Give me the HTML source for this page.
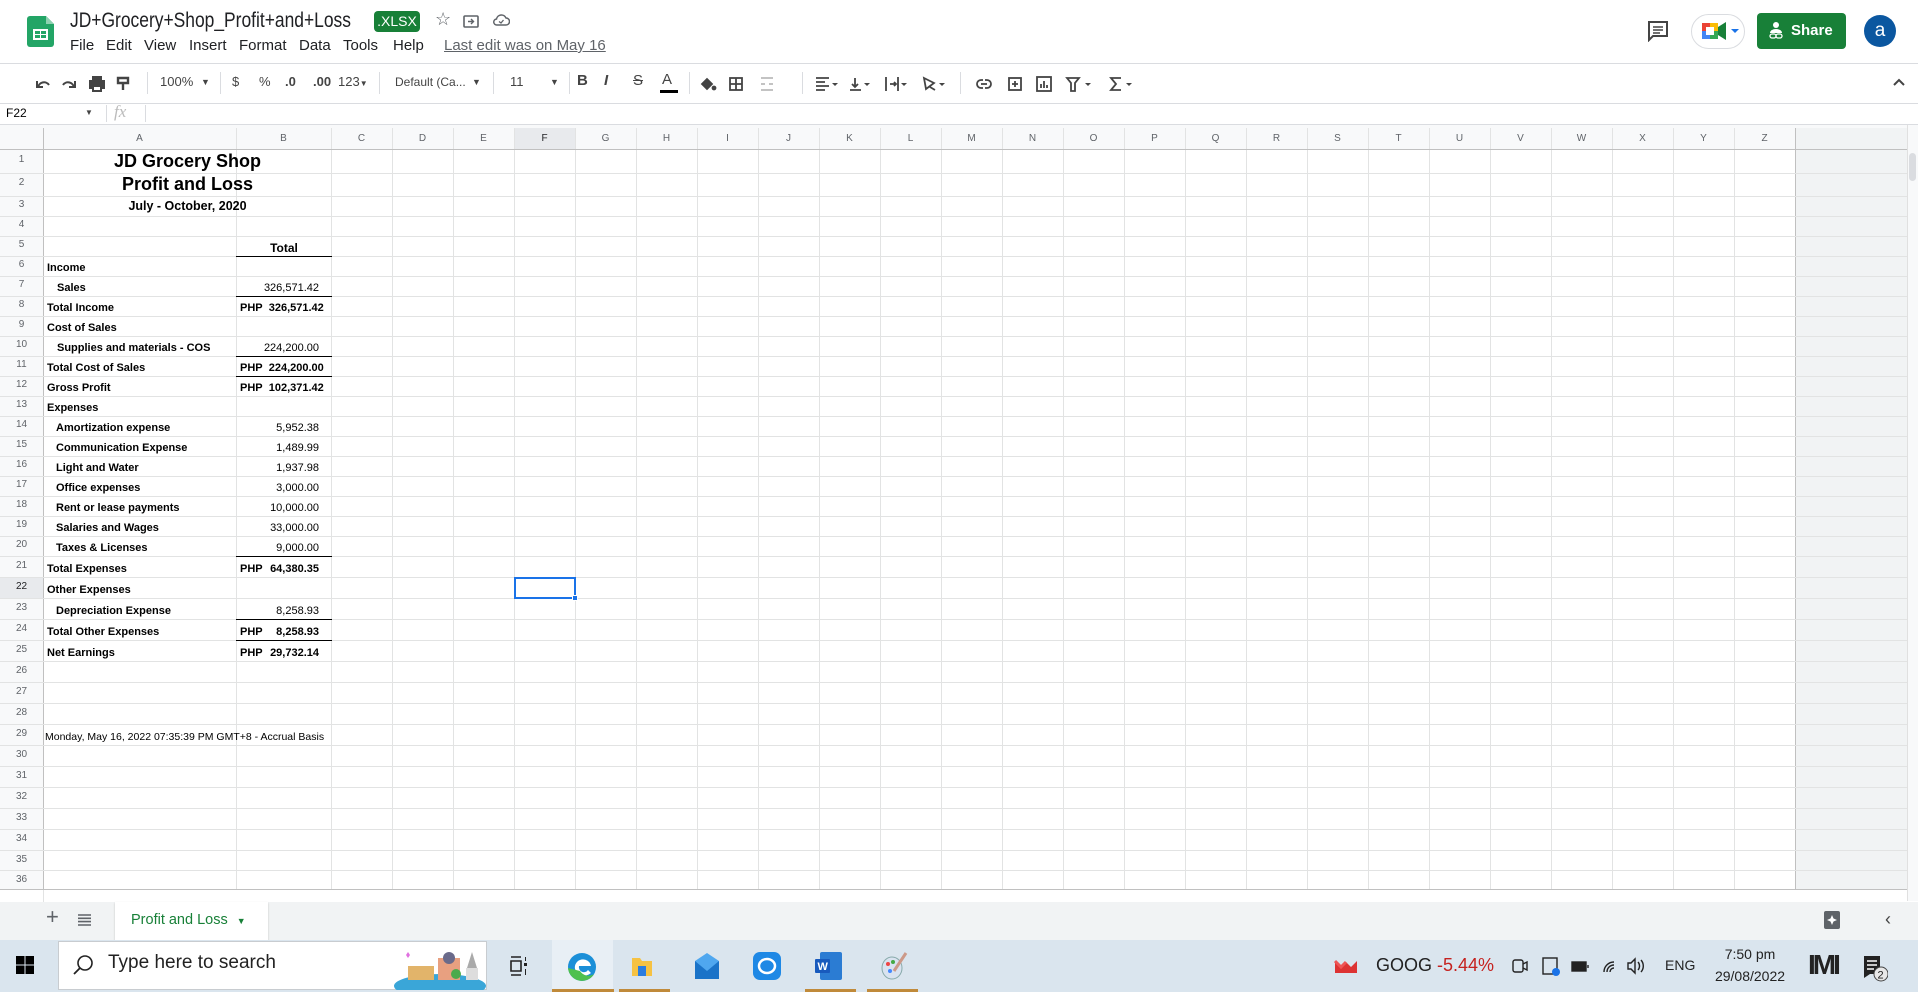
<!DOCTYPE html>
<html><head><meta charset="utf-8">
<style>
*{box-sizing:border-box;margin:0;padding:0}
body{width:1918px;height:992px;position:relative;overflow:hidden;background:#fff;font-family:"Liberation Sans",Arial,sans-serif;color:#000}
.a{position:absolute;white-space:nowrap}
.hl{position:absolute;left:0;width:1907px;height:1px;background:#e2e3e3}
.vl{position:absolute;top:128px;height:762px;width:1px;background:#e2e3e3}
.ch{position:absolute;top:128px;height:22px;line-height:22px;font-size:10px;color:#5f6368;text-align:center}
.rh{position:absolute;left:0;width:43px;text-align:center;font-size:10px;color:#5f6368}
.t{position:absolute;font-size:11px;font-weight:bold;white-space:nowrap}
.n{position:absolute;font-size:11px;white-space:nowrap;right:1599px;text-align:right}
.bl{position:absolute;left:236px;width:96px;height:1px;background:#000}
.tb{position:absolute;top:74px;color:#444;font-size:13px}
.sep{position:absolute;top:72px;width:1px;height:22px;background:#dadce0}
.m{position:absolute;top:37px;font-size:15px;color:#202124}
</style></head><body>

<!-- title bar -->
<svg class="a" style="left:27px;top:16px" width="27" height="31" viewBox="0 0 27 31"><path d="M0 3a3 3 0 0 1 3-3h16l8 8v20a3 3 0 0 1-3 3H3a3 3 0 0 1-3-3z" fill="#23a566"/><path d="M19 0v8h8z" fill="#8ed1b1"/><rect x="6" y="13" width="15" height="11" fill="#fff"/><rect x="8" y="15" width="5" height="3" fill="#23a566"/><rect x="14" y="15" width="5" height="3" fill="#23a566"/><rect x="8" y="19" width="5" height="3" fill="#23a566"/><rect x="14" y="19" width="5" height="3" fill="#23a566"/></svg>
<div class="a" style="left:70px;top:9px;font-size:21px;color:#202124;transform:scaleX(0.83);transform-origin:left top">JD+Grocery+Shop_Profit+and+Loss</div>
<div class="a" style="left:374px;top:11px;width:46px;height:21px;background:#188038;border-radius:4px;color:#fff;font-size:14px;line-height:21px;text-align:center">.XLSX</div>
<div class="a" style="left:435px;top:9px;font-size:18px;color:#5f6368">☆</div>
<svg class="a" style="left:463px;top:14px" width="16" height="14"><rect x="1" y="2" width="14" height="11" rx="1" fill="none" stroke="#5f6368" stroke-width="1.6"/><path d="M5 7.5h5M8 5l2.5 2.5L8 10" stroke="#5f6368" stroke-width="1.4" fill="none"/></svg>
<svg class="a" style="left:492px;top:13px" width="18" height="14"><path d="M5 12h9a3.5 3.5 0 0 0 0-7 5 5 0 0 0-9.5 1A3 3 0 0 0 5 12z" fill="none" stroke="#5f6368" stroke-width="1.5"/><path d="M7 8.5l2 1.5 2.5-3" stroke="#5f6368" stroke-width="1.3" fill="none"/></svg>
<div class="m" style="left:70px">File</div>
<div class="m" style="left:106px">Edit</div>
<div class="m" style="left:144px">View</div>
<div class="m" style="left:189px">Insert</div>
<div class="m" style="left:239px">Format</div>
<div class="m" style="left:299px">Data</div>
<div class="m" style="left:343px">Tools</div>
<div class="m" style="left:393px">Help</div>
<div class="m" style="left:444px;color:#5f6368;text-decoration:underline">Last edit was on May 16</div>

<svg class="a" style="left:1647px;top:20px" width="22" height="22"><path d="M2 2h18v14H6l-4 4z" fill="none" stroke="#444" stroke-width="2"/><path d="M6 7h10M6 10h10M6 13h7" stroke="#444" stroke-width="1.6"/></svg>
<div class="a" style="left:1691px;top:14px;width:54px;height:35px;border:1px solid #dadce0;border-radius:18px"></div>
<svg class="a" style="left:1702px;top:21px" width="40" height="20"><rect x="0" y="2" width="8" height="8" fill="#ea4335"/><rect x="8" y="2" width="8" height="8" fill="#fbbc04"/><rect x="0" y="10" width="8" height="8" fill="#4285f4"/><rect x="8" y="10" width="8" height="8" fill="#34a853"/><rect x="4" y="6" width="8" height="8" fill="#fff"/><path d="M16 6l8-5v18l-8-5z" fill="#188038"/><path d="M29 8l4 4 4-4z" fill="#1a73e8"/></svg>
<div class="a" style="left:1757px;top:13px;width:89px;height:36px;background:#188038;border-radius:4px;color:#fff;font-size:15px;font-weight:bold;line-height:36px;padding-left:34px">Share</div>
<svg class="a" style="left:1768px;top:21px" width="16" height="20"><circle cx="8" cy="4" r="3" fill="#fff"/><path d="M2 12a6 4 0 0 1 12 0z" fill="#fff"/><rect x="2" y="13" width="6" height="4" rx="2" fill="none" stroke="#fff" stroke-width="1.3"/><rect x="8" y="13" width="6" height="4" rx="2" fill="none" stroke="#fff" stroke-width="1.3"/></svg>
<div class="a" style="left:1864px;top:15px;width:32px;height:32px;border-radius:50%;background:#0b57a0;color:#fff;font-size:19px;line-height:31px;text-align:center">a</div>

<div class="a" style="left:0;top:63px;width:1918px;height:1px;background:#dadce0"></div>

<!-- toolbar -->
<svg class="a" style="left:35px;top:76px" width="110" height="16" stroke="#444" stroke-width="2" fill="none"><path d="M3 12a6 6 0 0 1 11-3M2 5v6h6"/><path d="M39 12a6 6 0 0 0-11-3M40 5v6h-6"/><rect x="55" y="5" width="14" height="7" fill="#444"/><rect x="58" y="1" width="8" height="4" fill="#444"/><rect x="58" y="10" width="8" height="5" fill="#fff"/><path d="M83 2h10v5H83zM88 7v7" stroke-width="2.4"/></svg>
<div class="sep" style="left:147px"></div>
<div class="tb" style="left:160px">100%</div><div class="tb" style="left:201px;font-size:9px;top:77px">▼</div>
<div class="sep" style="left:220px"></div>
<div class="tb" style="left:232px">$</div>
<div class="tb" style="left:259px">%</div>
<div class="tb" style="left:285px;font-weight:bold">.0</div>
<div class="tb" style="left:313px;font-weight:bold">.00</div>
<div class="tb" style="left:338px">123<span style="font-size:8px">▼</span></div>
<div class="sep" style="left:379px"></div>
<div class="tb" style="left:395px;font-size:12px;top:75px">Default (Ca...</div><div class="tb" style="left:472px;font-size:9px;top:77px">▼</div>
<div class="sep" style="left:493px"></div>
<div class="tb" style="left:510px">11</div><div class="tb" style="left:550px;font-size:9px;top:77px">▼</div>
<div class="sep" style="left:569px"></div>
<div class="tb" style="left:577px;font-weight:bold;font-size:15px;top:72px">B</div>
<div class="tb" style="left:604px;font-style:italic;font-weight:bold;font-size:15px;top:72px">I</div>
<div class="tb" style="left:633px;text-decoration:line-through;font-size:15px;top:72px">S</div>
<div class="tb" style="left:662px;font-size:15px;top:71px">A</div><div class="a" style="left:660px;top:90px;width:18px;height:3px;background:#000"></div>
<div class="sep" style="left:689px"></div>
<svg class="a" style="left:698px;top:75px" width="440" height="18" stroke="#444" stroke-width="1.8" fill="none">
<path d="M4 9l5-5 5 5-5 5z" fill="#444"/><circle cx="16" cy="13" r="1.5" fill="#444"/>
<rect x="32" y="3" width="12" height="12"/><path d="M38 3v12M32 9h12"/>
<path d="M63 3h12M63 15h12M63 9h4M71 9h4" stroke="#bbb"/>
<path d="M118 3h13M118 7h9M118 11h13M118 15h9"/><path d="M134 8l3 3 3-3z" fill="#444" stroke="none"/>
<path d="M152 15h11M157 3v9M154 9l3 3 3-3"/><path d="M166 8l3 3 3-3z" fill="#444" stroke="none"/>
<path d="M188 2v14M200 2v14M192 9h6M196 7l2 2-2 2"/><path d="M203 8l3 3 3-3z" fill="#444" stroke="none"/>
<path d="M226 3l10 5-8 6zM232 12l5 3"/><path d="M241 8l3 3 3-3z" fill="#444" stroke="none"/>
<path d="M283 9h6M285 5h-2a4 4 0 0 0 0 8h2M287 5h2a4 4 0 0 1 0 8h-2"/>
<rect x="311" y="3" width="12" height="12"/><path d="M317 6v6M314 9h6"/>
<rect x="339" y="2" width="14" height="14"/><path d="M343 13v-4M346 13V6M349 13v-3"/>
<path d="M369 3h12l-4 5v8h-4V8z"/><path d="M387 8l3 3 3-3z" fill="#444" stroke="none"/>
<path d="M423 3h-10l5 6-5 6h10"/><path d="M428 8l3 3 3-3z" fill="#444" stroke="none"/>
</svg>
<div class="sep" style="left:802px"></div><div class="sep" style="left:960px"></div>
<svg class="a" style="left:1892px;top:77px" width="14" height="10"><path d="M2 8l5-5 5 5" stroke="#444" stroke-width="2" fill="none"/></svg>

<div class="a" style="left:0;top:103px;width:1918px;height:1px;background:#dadce0"></div>
<div class="a" style="left:6px;top:106px;font-size:12px;color:#000">F22</div>
<div class="a" style="left:85px;top:108px;font-size:8px;color:#444">▼</div>
<div class="a" style="left:106px;top:105px;width:1px;height:17px;background:#dadce0"></div>
<div class="a" style="left:114px;top:102px;font-size:17px;color:#bbb;font-style:italic;font-family:'Liberation Serif',serif">fx</div>
<div class="a" style="left:145px;top:105px;width:1px;height:17px;background:#dadce0"></div>
<div class="a" style="left:0;top:124px;width:1918px;height:1px;background:#dadce0"></div>

<!-- grid background -->
<div class="a" style="left:0;top:125px;width:1918px;height:3px;background:#f8f9fa"></div>
<div class="a" style="left:0;top:128px;width:1907px;height:22px;background:#f8f9fa"></div>
<div class="a" style="left:0;top:128px;width:43px;height:762px;background:#f8f9fa"></div>
<div class="a" style="left:514px;top:128px;width:61px;height:22px;background:#e8eaed"></div>
<div class="a" style="left:0;top:578px;width:43px;height:21px;background:#e8eaed"></div>
<div class="a" style="left:1796px;top:128px;width:111px;height:762px;background:#f1f3f4"></div>
<div class="a" style="left:1907px;top:125px;width:11px;height:776px;background:#f8f9fa;border-left:1px solid #e0e0e0"></div>
<div class="a" style="left:1909px;top:153px;width:7px;height:28px;background:#dadce0;border-radius:4px"></div>

<!-- vertical lines -->
<div class="vl" style="left:43px;background:#c0c0c0"></div>
<div class="vl" style="left:236px"></div><div class="vl" style="left:331px"></div>
<div class="vl" style="left:392px"></div><div class="vl" style="left:453px"></div><div class="vl" style="left:514px"></div><div class="vl" style="left:575px"></div><div class="vl" style="left:636px"></div><div class="vl" style="left:697px"></div><div class="vl" style="left:758px"></div><div class="vl" style="left:819px"></div><div class="vl" style="left:880px"></div><div class="vl" style="left:941px"></div><div class="vl" style="left:1002px"></div><div class="vl" style="left:1063px"></div><div class="vl" style="left:1124px"></div><div class="vl" style="left:1185px"></div><div class="vl" style="left:1246px"></div><div class="vl" style="left:1307px"></div><div class="vl" style="left:1368px"></div><div class="vl" style="left:1429px"></div><div class="vl" style="left:1490px"></div><div class="vl" style="left:1551px"></div><div class="vl" style="left:1612px"></div><div class="vl" style="left:1673px"></div><div class="vl" style="left:1734px"></div><div class="vl" style="left:1795px;background:#c0c0c0"></div>

<!-- horizontal lines -->
<div class="hl" style="top:149px;background:#c0c0c0"></div>
<div class="hl" style="top:173px"></div><div class="hl" style="top:196px"></div><div class="hl" style="top:216px"></div><div class="hl" style="top:236px"></div><div class="hl" style="top:256px"></div><div class="hl" style="top:276px"></div><div class="hl" style="top:296px"></div><div class="hl" style="top:316px"></div><div class="hl" style="top:336px"></div><div class="hl" style="top:356px"></div><div class="hl" style="top:376px"></div><div class="hl" style="top:396px"></div><div class="hl" style="top:416px"></div><div class="hl" style="top:436px"></div><div class="hl" style="top:456px"></div><div class="hl" style="top:476px"></div><div class="hl" style="top:496px"></div><div class="hl" style="top:516px"></div><div class="hl" style="top:536px"></div><div class="hl" style="top:556px"></div><div class="hl" style="top:577px"></div><div class="hl" style="top:598px"></div><div class="hl" style="top:619px"></div><div class="hl" style="top:640px"></div><div class="hl" style="top:661px"></div><div class="hl" style="top:682px"></div><div class="hl" style="top:703px"></div><div class="hl" style="top:724px"></div><div class="hl" style="top:745px"></div><div class="hl" style="top:766px"></div><div class="hl" style="top:787px"></div><div class="hl" style="top:808px"></div><div class="hl" style="top:829px"></div><div class="hl" style="top:850px"></div><div class="hl" style="top:870px"></div><div class="hl" style="top:889px;background:#c0c0c0"></div>

<!-- column headers -->
<div class="ch" style="left:43px;width:193px">A</div><div class="ch" style="left:236px;width:95px">B</div>
<div class="ch" style="left:331px;width:61px">C</div><div class="ch" style="left:392px;width:61px">D</div><div class="ch" style="left:453px;width:61px">E</div><div class="ch" style="left:514px;width:61px;color:#202124">F</div><div class="ch" style="left:575px;width:61px">G</div><div class="ch" style="left:636px;width:61px">H</div><div class="ch" style="left:697px;width:61px">I</div><div class="ch" style="left:758px;width:61px">J</div><div class="ch" style="left:819px;width:61px">K</div><div class="ch" style="left:880px;width:61px">L</div><div class="ch" style="left:941px;width:61px">M</div><div class="ch" style="left:1002px;width:61px">N</div><div class="ch" style="left:1063px;width:61px">O</div><div class="ch" style="left:1124px;width:61px">P</div><div class="ch" style="left:1185px;width:61px">Q</div><div class="ch" style="left:1246px;width:61px">R</div><div class="ch" style="left:1307px;width:61px">S</div><div class="ch" style="left:1368px;width:61px">T</div><div class="ch" style="left:1429px;width:61px">U</div><div class="ch" style="left:1490px;width:61px">V</div><div class="ch" style="left:1551px;width:61px">W</div><div class="ch" style="left:1612px;width:61px">X</div><div class="ch" style="left:1673px;width:61px">Y</div><div class="ch" style="left:1734px;width:61px">Z</div>

<!-- row headers -->
<div class="rh" style="top:154px">1</div><div class="rh" style="top:177px">2</div><div class="rh" style="top:199px">3</div><div class="rh" style="top:219px">4</div><div class="rh" style="top:239px">5</div><div class="rh" style="top:259px">6</div><div class="rh" style="top:279px">7</div><div class="rh" style="top:299px">8</div><div class="rh" style="top:319px">9</div><div class="rh" style="top:339px">10</div><div class="rh" style="top:359px">11</div><div class="rh" style="top:379px">12</div><div class="rh" style="top:399px">13</div><div class="rh" style="top:419px">14</div><div class="rh" style="top:439px">15</div><div class="rh" style="top:459px">16</div><div class="rh" style="top:479px">17</div><div class="rh" style="top:499px">18</div><div class="rh" style="top:519px">19</div><div class="rh" style="top:539px">20</div><div class="rh" style="top:560px">21</div><div class="rh" style="top:581px;color:#202124">22</div><div class="rh" style="top:602px">23</div><div class="rh" style="top:623px">24</div><div class="rh" style="top:644px">25</div><div class="rh" style="top:665px">26</div><div class="rh" style="top:686px">27</div><div class="rh" style="top:707px">28</div><div class="rh" style="top:728px">29</div><div class="rh" style="top:749px">30</div><div class="rh" style="top:770px">31</div><div class="rh" style="top:791px">32</div><div class="rh" style="top:812px">33</div><div class="rh" style="top:833px">34</div><div class="rh" style="top:854px">35</div><div class="rh" style="top:874px">36</div>

<!-- cell content -->
<div class="t" style="left:44px;width:287px;text-align:center;top:151px;font-size:18px">JD Grocery Shop</div>
<div class="t" style="left:44px;width:287px;text-align:center;top:174px;font-size:18px">Profit and Loss</div>
<div class="t" style="left:44px;width:287px;text-align:center;top:199px;font-size:12.5px">July - October, 2020</div>
<div class="t" style="left:236px;width:96px;text-align:center;top:241px;font-size:12px">Total</div>
<div class="t" style="left:47px;top:262px">Income</div>
<div class="t" style="left:57px;top:282px">Sales</div><div class="n" style="top:282px">326,571.42</div>
<div class="t" style="left:47px;top:302px">Total Income</div><div class="t" style="left:240px;top:302px">PHP&nbsp; 326,571.42</div>
<div class="t" style="left:47px;top:322px">Cost of Sales</div>
<div class="t" style="left:57px;top:342px">Supplies and materials - COS</div><div class="n" style="top:342px">224,200.00</div>
<div class="t" style="left:47px;top:362px">Total Cost of Sales</div><div class="t" style="left:240px;top:362px">PHP&nbsp; 224,200.00</div>
<div class="t" style="left:47px;top:382px">Gross Profit</div><div class="t" style="left:240px;top:382px">PHP&nbsp; 102,371.42</div>
<div class="t" style="left:47px;top:402px">Expenses</div>
<div class="t" style="left:56px;top:422px">Amortization expense</div><div class="n" style="top:422px">5,952.38</div>
<div class="t" style="left:56px;top:442px">Communication Expense</div><div class="n" style="top:442px">1,489.99</div>
<div class="t" style="left:56px;top:462px">Light and Water</div><div class="n" style="top:462px">1,937.98</div>
<div class="t" style="left:56px;top:482px">Office expenses</div><div class="n" style="top:482px">3,000.00</div>
<div class="t" style="left:56px;top:502px">Rent or lease payments</div><div class="n" style="top:502px">10,000.00</div>
<div class="t" style="left:56px;top:522px">Salaries and Wages</div><div class="n" style="top:522px">33,000.00</div>
<div class="t" style="left:56px;top:542px">Taxes &amp; Licenses</div><div class="n" style="top:542px">9,000.00</div>
<div class="t" style="left:47px;top:563px">Total Expenses</div><div class="t" style="left:240px;top:563px">PHP</div><div class="t n" style="top:563px">64,380.35</div>
<div class="t" style="left:47px;top:584px">Other Expenses</div>
<div class="t" style="left:56px;top:605px">Depreciation Expense</div><div class="n" style="top:605px">8,258.93</div>
<div class="t" style="left:47px;top:626px">Total Other Expenses</div><div class="t" style="left:240px;top:626px">PHP</div><div class="t n" style="top:626px">8,258.93</div>
<div class="t" style="left:47px;top:647px">Net Earnings</div><div class="t" style="left:240px;top:647px">PHP</div><div class="t n" style="top:647px">29,732.14</div>
<div class="a" style="left:45px;top:731px;font-size:10.5px">Monday, May 16, 2022 07:35:39 PM GMT+8 - Accrual Basis</div>

<div class="bl" style="top:256px"></div><div class="bl" style="top:296px"></div><div class="bl" style="top:356px"></div><div class="bl" style="top:376px"></div><div class="bl" style="top:556px"></div><div class="bl" style="top:619px"></div><div class="bl" style="top:640px"></div>

<!-- selection -->
<div class="a" style="left:514px;top:577px;width:62px;height:22px;border:2px solid #1a73e8"></div>
<div class="a" style="left:572px;top:595px;width:6px;height:6px;background:#1a73e8;border:1px solid #fff"></div>

<!-- scroll strip & sheet bar -->
<div class="a" style="left:0;top:890px;width:1907px;height:12px;background:#fff"></div>
<div class="a" style="left:43px;top:890px;width:1px;height:12px;background:#e2e3e3"></div>
<div class="a" style="left:0;top:902px;width:1918px;height:38px;background:#f1f3f4"></div>
<div class="a" style="left:46px;top:904px;font-size:22px;color:#5f6368">+</div>
<svg class="a" style="left:78px;top:914px" width="13" height="12"><path d="M0 1h13M0 4.3h13M0 7.6h13M0 11h13" stroke="#5f6368" stroke-width="1.6"/></svg>
<div class="a" style="left:115px;top:902px;width:153px;height:38px;background:#fff;box-shadow:0 1px 2px rgba(0,0,0,.2)"></div>
<div class="a" style="left:131px;top:912px;font-size:14.5px;color:#188038">Profit and Loss <span style="font-size:9px;margin-left:5px">▼</span></div>
<svg class="a" style="left:1824px;top:911px" width="16" height="20"><rect x="0" y="0" width="16" height="18" rx="2" fill="#5f6368"/><path d="M8 4l1.5 3.5L13 9l-3.5 1.5L8 14l-1.5-3.5L3 9l3.5-1.5z" fill="#fff"/></svg>
<div class="a" style="left:1885px;top:909px;font-size:18px;color:#444">‹</div>

<!-- taskbar -->
<div class="a" style="left:0;top:940px;width:1918px;height:52px;background:#dae5ee"></div>
<svg class="a" style="left:16px;top:956px" width="18" height="18"><rect x="0" y="0" width="8.5" height="8.5" fill="#000"/><rect x="9.5" y="0" width="8.5" height="8.5" fill="#000"/><rect x="0" y="9.5" width="8.5" height="8.5" fill="#000"/><rect x="9.5" y="9.5" width="8.5" height="8.5" fill="#000"/></svg>
<div class="a" style="left:58px;top:941px;width:429px;height:49px;background:#fff;border:1px solid #c8ccd0"></div>
<svg class="a" style="left:72px;top:954px" width="22" height="22"><circle cx="13" cy="9" r="7" fill="none" stroke="#222" stroke-width="1.6"/><path d="M8 14L2 20" stroke="#222" stroke-width="1.8"/></svg>
<div class="a" style="left:108px;top:952px;font-size:19px;color:#222">Type here to search</div>
<svg class="a" style="left:390px;top:944px" width="97" height="46"><ellipse cx="50" cy="42" rx="46" ry="12" fill="#3aa6d8"/><rect x="18" y="22" width="26" height="14" fill="#e2b46a"/><rect x="48" y="14" width="22" height="22" fill="#e8a080"/><circle cx="59" cy="14" r="6" fill="#6a6a8a"/><path d="M82 8l-5 16h10z" fill="#aaa"/><rect x="76" y="24" width="12" height="12" fill="#ddd"/><circle cx="66" cy="30" r="5" fill="#4caa4c"/><path d="M18 8l2 3-2 3-2-3z" fill="#e070e0"/></svg>
<svg class="a" style="left:508px;top:955px" width="20" height="22"><path d="M3 2h10M3 20h10M3 6h10v10H3z" stroke="#222" stroke-width="1.6" fill="none"/><rect x="16" y="8" width="3" height="3" fill="#222"/><path d="M17.5 2v4M17.5 14v6" stroke="#222"/></svg>
<div class="a" style="left:552px;top:940px;width:61px;height:52px;background:#e8eff5"></div>
<svg class="a" style="left:566px;top:951px" width="32" height="32"><circle cx="16" cy="16" r="14" fill="#1b8fd8"/><path d="M9 18a8 8 0 0 1 16-3H13a5 5 0 0 0 9 4l3 3a10 10 0 0 1-16-4z" fill="#fff"/><path d="M2 17a14 14 0 0 0 26 6 10 10 0 0 1-14-3z" fill="#4ec04e"/></svg>
<div class="a" style="left:552px;top:989px;width:62px;height:3px;background:#c08a3a"></div>
<svg class="a" style="left:630px;top:954px" width="24" height="24"><path d="M2 4h8l2 3h10v15H2z" fill="#f6c243"/><rect x="8" y="12" width="8" height="10" fill="#2b7de0"/></svg>
<div class="a" style="left:619px;top:989px;width:51px;height:3px;background:#c08a3a"></div>
<svg class="a" style="left:693px;top:953px" width="28" height="26"><path d="M2 8h24v18H2z" fill="#1a73c8"/><path d="M2 8l12 10 12-10L14 0z" fill="#4fa7ef"/></svg>
<svg class="a" style="left:752px;top:951px" width="30" height="30"><rect x="1" y="1" width="28" height="28" rx="7" fill="#1e88e5"/><ellipse cx="15" cy="15" rx="8" ry="7" fill="none" stroke="#fff" stroke-width="2.5"/></svg>
<svg class="a" style="left:814px;top:951px" width="30" height="30"><rect x="6" y="1" width="22" height="28" rx="2" fill="#2b7cd3"/><rect x="1" y="8" width="15" height="14" rx="1" fill="#185abd"/><text x="3.5" y="19" font-size="11" fill="#fff" font-family="Liberation Sans" font-weight="bold">W</text></svg>
<div class="a" style="left:805px;top:989px;width:51px;height:3px;background:#c08a3a"></div>
<svg class="a" style="left:878px;top:951px" width="30" height="30"><ellipse cx="14" cy="17" rx="10" ry="11" fill="#d9e3f0" stroke="#8aa" /><circle cx="10" cy="13" r="2" fill="#e44"/><circle cx="15" cy="11" r="2" fill="#4a4"/><circle cx="12" cy="20" r="2" fill="#48f"/><path d="M28 2L16 20" stroke="#c98" stroke-width="3"/></svg>
<div class="a" style="left:867px;top:989px;width:51px;height:3px;background:#c08a3a"></div>

<svg class="a" style="left:1334px;top:955px" width="24" height="20"><path d="M1 6l6 6 5-5 5 5 6-6v12H1z" fill="#d33"/><path d="M1 6l6 6 5-5" stroke="#e55" stroke-width="3" fill="none"/></svg>
<div class="a" style="left:1376px;top:955px;font-size:18px;color:#222">GOOG</div>
<div class="a" style="left:1437px;top:955px;font-size:18px;color:#c5221f">-5.44%</div>
<svg class="a" style="left:1512px;top:955px" width="140" height="22" stroke="#222" stroke-width="1.4" fill="none"><rect x="1" y="5" width="10" height="12" rx="2"/><path d="M11 9l4-2v8l-4-2"/><rect x="31" y="3" width="14" height="16"/><circle cx="44" cy="17" r="4" fill="#1a73e8" stroke="none"/><rect x="60" y="7" width="14" height="9" fill="#222"/><path d="M76 10v3"/><path d="M92 17a10 10 0 0 1 10-10M95 17a7 7 0 0 1 7-7M98 17a4 4 0 0 1 4-4"/><path d="M116 8h3l4-4v14l-4-4h-3zM126 7a6 6 0 0 1 0 8M129 5a9 9 0 0 1 0 12"/></svg>
<div class="a" style="left:1665px;top:957px;font-size:14px;color:#222">ENG</div>
<div class="a" style="left:1712px;top:943px;width:76px;text-align:center;font-size:14px;color:#222;line-height:22px">7:50 pm<br>29/08/2022</div>
<div class="a" style="left:1808px;top:949px;font-size:28px;font-weight:bold;color:#222;letter-spacing:-3px">IMI</div>
<svg class="a" style="left:1862px;top:954px" width="26" height="28"><path d="M2 2h16v18H8l-6 4z" fill="#222"/><path d="M5 7h10M5 11h10M5 15h7" stroke="#fff" stroke-width="1.5"/><circle cx="19" cy="20" r="7" fill="#e8e8e8" stroke="#444"/><text x="15.5" y="24.5" font-size="11" font-family="Liberation Sans" fill="#222">2</text></svg>

</body></html>
